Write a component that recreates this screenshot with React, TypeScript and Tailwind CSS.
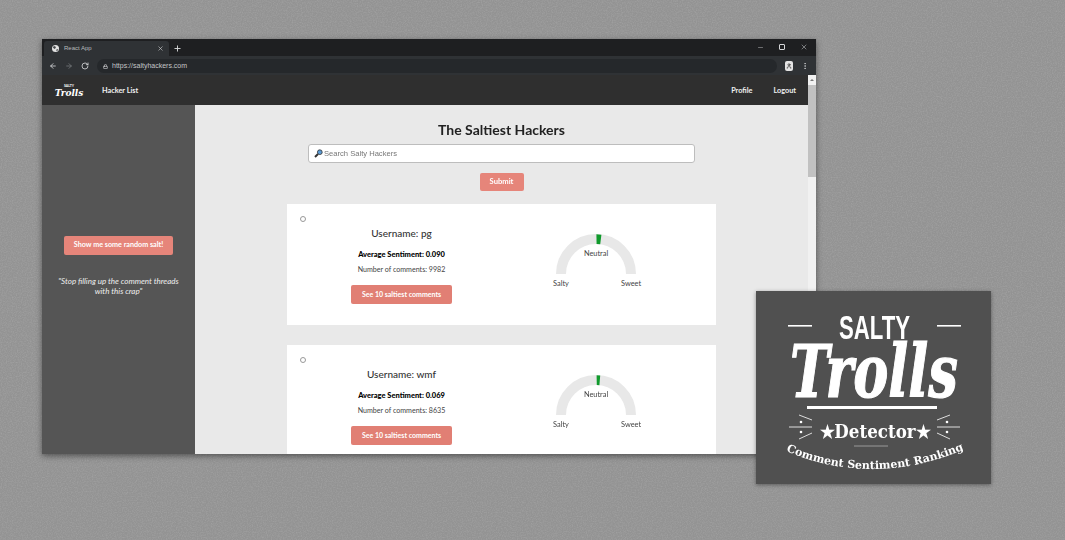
import { ArrowLeft, ArrowRight, Lock, Minus, MoreVertical, Plus, RotateCw, User, X } from "lucide-react";

type Hacker = {
  username: string;
  sentiment: string;
  comments: number;
  needle: string;
};

const hackers: Hacker[] = [
  { username: "pg", sentiment: "0.090", comments: 9982, needle: "M40.4 0.2 L45.4 0.7 L44.2 10.2 L40.6 10 Z" },
  { username: "wmf", sentiment: "0.069", comments: 8635, needle: "M40.6 0.2 L44.2 0.5 L43.4 10.2 L40.8 10 Z" },
];

function Gauge({ needle }: { needle: string }) {
  return (
    <div className="relative h-[58px] w-[100px] text-[7.4px] text-[#444]">
      <svg width="80" height="41" viewBox="0 0 80 41" className="absolute left-[10px] top-0">
        <path d="M5 40 A35 35 0 0 1 75 40" fill="none" stroke="#e8e8e8" strokeWidth="10" />
        <path d={needle} fill="#109a2c" />
      </svg>
      <span className="absolute left-0 right-0 top-[14px] text-center">Neutral</span>
      <span className="absolute left-[5px] top-[44px] w-[20px] text-center">Salty</span>
      <span className="absolute right-[5px] top-[44px] w-[20px] text-center">Sweet</span>
    </div>
  );
}

function HackerCard({ hacker }: { hacker: Hacker }) {
  return (
    <div className="relative flex h-[121px] w-[429px] shrink-0 items-start bg-white">
      <span className="absolute left-[13px] top-[12px] size-[6px] rounded-full border border-[#999]" />
      <div className="flex w-[229px] flex-col items-center pt-[20px]">
        <h3 className="text-[10px] leading-[18px] font-medium text-[#333]">Username: {hacker.username}</h3>
        <p className="mt-[7px] text-[7.5px] leading-[12px] font-black text-black">
          Average Sentiment: {hacker.sentiment}
        </p>
        <p className="mt-[3px] text-[7.1px] leading-[12px] text-[#444]">Number of comments: {hacker.comments}</p>
        <button className="mt-[9px] h-[19px] w-[101px] rounded-[2px] bg-[#e17f74] text-[7px] font-bold text-white">
          See 10 saltiest comments
        </button>
      </div>
      <div className="ml-[30px] mt-[30px]">
        <Gauge needle={hacker.needle} />
      </div>
    </div>
  );
}

function Emblem() {
  return (
    <svg width="235" height="193" viewBox="0 0 235 193" className="block">
      <g fill="#fff">
        <rect x="32" y="34" width="24" height="1.6" />
        <rect x="181" y="34" width="24" height="1.6" />
        <text
          x="118.5"
          y="48"
          textAnchor="middle"
          textLength="71"
          lengthAdjust="spacingAndGlyphs"
          fontSize="33"
          fontWeight="700"
          fontFamily="Liberation Sans, sans-serif"
        >
          SALTY
        </text>
        <text
          x="118"
          y="106"
          textAnchor="middle"
          textLength="168"
          lengthAdjust="spacingAndGlyphs"
          fontSize="72"
          fontWeight="700"
          fontStyle="italic"
          fontFamily="DejaVu Serif, serif"
          stroke="#fff"
          strokeWidth="1.2"
        >
          Trolls
        </text>
        <rect x="51" y="115" width="130" height="3" />
        <text
          x="119"
          y="147"
          textAnchor="middle"
          textLength="111"
          lengthAdjust="spacingAndGlyphs"
          fontSize="18"
          fontWeight="700"
          fontFamily="DejaVu Serif, serif"
        >
          ★Detector★
        </text>
        <text fontSize="11" fontWeight="700" fontFamily="DejaVu Serif, serif">
          <textPath href="#emblem-curve">Comment Sentiment Ranking</textPath>
        </text>
      </g>
      <path id="emblem-curve" d="M30 160 Q119 198 214 156" fill="none" />
      <g stroke="#ddd" strokeWidth="1" fill="none">
        <path d="M33 136 H56 M56 129 L43 124 M56 142 L43 148" />
        <path d="M204 136 H181 M181 129 L194 124 M181 142 L194 148" />
        <path d="M98 155 H132" stroke="#999" />
      </g>
      <g fill="#fff">
        <circle cx="45" cy="131" r="1.3" />
        <circle cx="45" cy="141" r="1.3" />
        <circle cx="191" cy="131" r="1.3" />
        <circle cx="191" cy="141" r="1.3" />
      </g>
    </svg>
  );
}

function BrowserChrome() {
  return (
    <>
      <div className="flex h-[17px] shrink-0 items-end bg-[#1e1f21] pl-[2px] text-[#d5d6d8]">
        <div className="flex h-[15px] w-[125px] items-center rounded-t-[3px] bg-[#2f3235] pb-[1px] pl-[8px] pr-[5px]">
          <svg width="7" height="7" viewBox="0 0 8 8">
            <circle cx="4" cy="4" r="4" fill="#e2e2e2" />
            <path d="M1 2 L3.5 1 L4.5 3 L3 4.5 L1.5 3.5 Z M5 5 L7 4.5 L6 7 L5 6.6 Z" fill="#44474a" />
          </svg>
          <span className="ml-[5px] font-['Liberation_Sans',sans-serif] text-[6px] text-[#b8babc]">React App</span>
          <X className="ml-auto size-[7px]" strokeWidth={2} />
        </div>
        <Plus className="mb-[3px] ml-[4px] size-[9px]" strokeWidth={2.5} />
        <div className="mb-[5px] ml-auto flex items-center pr-[8px]">
          <Minus className="size-[7px]" strokeWidth={1.5} />
          <span className="ml-[15px] size-[6px] rounded-[1px] border border-[#d5d6d8]" />
          <X className="ml-[15px] size-[8px]" strokeWidth={1.5} />
        </div>
      </div>
      <div className="flex h-[19px] shrink-0 items-center bg-[#2f3235] pl-[7px] text-[#d5d6d8]">
        <ArrowLeft className="size-[8px]" strokeWidth={2.5} />
        <ArrowRight className="ml-[8px] size-[8px] text-[#74777a]" strokeWidth={2.5} />
        <RotateCw className="ml-[8px] size-[8px]" strokeWidth={2.5} />
        <div className="ml-[8px] flex h-[14px] w-[680px] items-center rounded-full bg-[#25282b] pl-[6px] pt-[1px]">
          <Lock className="size-[5px]" strokeWidth={3} />
          <span className="ml-[4px] font-['Liberation_Sans',sans-serif] text-[7px] text-[#c4c6c8]">
            https://saltyhackers.com
          </span>
        </div>
        <span className="ml-[8px] flex h-[10px] w-[8px] items-center justify-center rounded-[2px] bg-[#e4e4e4]">
          <User className="size-[6px] text-[#333]" strokeWidth={3} />
        </span>
        <MoreVertical className="ml-[8px] size-[8px]" strokeWidth={2} />
      </div>
    </>
  );
}

export default function App() {
  return (
    <div className="relative h-[540px] w-[1065px] overflow-hidden bg-[#939393] font-['Lato',sans-serif]">
      <svg width="1065" height="540" className="absolute inset-0">
        <filter id="grain">
          <feTurbulence type="fractalNoise" baseFrequency="0.8" numOctaves="2" />
          <feColorMatrix values="0 0 0 0 0.35 0 0 0 0 0.35 0 0 0 0 0.35 2 0 0 0 -0.75" />
        </filter>
        <rect width="1065" height="540" filter="url(#grain)" />
      </svg>

      <div className="absolute left-[42px] top-[39px] flex h-[415px] w-[774px] flex-col overflow-hidden bg-[#e9e9e9] shadow-[0_2px_6px_rgba(0,0,0,0.45)] blur-[0.35px]">
        <BrowserChrome />

        <div className="flex min-h-0 flex-1">
          <div className="flex min-w-0 flex-1 flex-col">
            <header className="flex h-[30px] shrink-0 items-center bg-[#2f2f2f] pt-[2px] text-[7.3px] font-bold text-[#f0f0f0]">
              <div className="ml-[13px] flex w-[28px] flex-col items-center text-white">
                <span className="text-[3.5px] leading-[4px] font-bold">SALTY</span>
                <span className="font-['DejaVu_Serif',serif] text-[9px] leading-[10px] font-bold italic">Trolls</span>
              </div>
              <span className="ml-[19px]">Hacker List</span>
              <span className="ml-auto mr-[1px]">Profile</span>
              <span className="ml-[20px] mr-[12px]">Logout</span>
            </header>

            <div className="flex min-h-0 flex-1">
              <aside className="flex w-[153px] shrink-0 flex-col items-center bg-[#555555] pt-[131px]">
                <button className="h-[19px] w-[109px] rounded-[2px] bg-[#e6857a] text-[7.2px] font-bold text-white">
                  Show me some random salt!
                </button>
                <p className="mt-[21px] w-[130px] text-center text-[8px] leading-[10px] italic text-[#eeeeee]">
                  "Stop filling up the comment threads with this crap"
                </p>
              </aside>

              <main className="flex min-w-0 flex-1 flex-col items-center overflow-hidden">
                <h1 className="mt-[16px] text-[14px] leading-[18px] font-bold text-[#222]">The Saltiest Hackers</h1>
                <div className="mt-[5px] flex h-[19px] w-[387px] shrink-0 items-center rounded-[3px] border-[1.5px] border-[#bdbdbd] bg-white pl-[5px] text-[7.6px] text-[#777]">
                  <svg width="9" height="9" viewBox="0 0 9 9" className="mr-[1px]">
                    <path d="M1 8 L4 5" stroke="#333" strokeWidth="2" />
                    <circle cx="5.8" cy="3.2" r="2.4" fill="#5b9bd5" stroke="#333" strokeWidth="0.8" />
                  </svg>
                  <span className="font-['Liberation_Sans',sans-serif]">Search Salty Hackers</span>
                </div>
                <button className="mt-[10px] h-[18px] w-[44px] shrink-0 rounded-[2px] bg-[#e6857a] text-[7.6px] font-bold text-white">
                  Submit
                </button>
                <div className="mt-[13px] flex flex-col gap-[20px]">
                  {hackers.map((hacker) => (
                    <HackerCard key={hacker.username} hacker={hacker} />
                  ))}
                </div>
              </main>
            </div>
          </div>

          <div className="flex w-[8px] shrink-0 flex-col items-center bg-[#f1f1f1]">
            <span className="flex h-[10px] shrink-0 items-center">
              <span className="border-x-[2px] border-b-[2px] border-x-transparent border-b-[#777]" />
            </span>
            <span className="h-[92px] w-full bg-[#c1c1c1]" />
          </div>
        </div>
      </div>

      <div className="absolute left-[756px] top-[291px] h-[193px] w-[235px] bg-[#505050] shadow-[0_1px_4px_rgba(0,0,0,0.4)]">
        <Emblem />
      </div>
    </div>
  );
}
